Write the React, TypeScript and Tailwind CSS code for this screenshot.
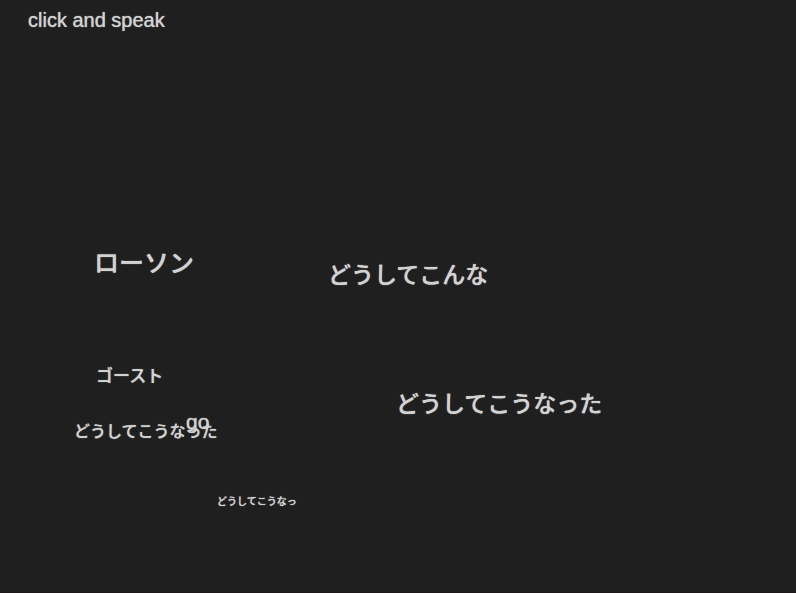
type Phrase = { text: string; className: string };

const phrases: Phrase[] = [
  { text: 'ローソン', className: 'left-[94px] top-[248px] text-[25px]' },
  { text: 'どうしてこんな', className: 'left-[328px] top-[260px] text-[23px]' },
  { text: 'ゴースト', className: 'left-[96px] top-[362px] text-[17px]' },
  { text: 'どうしてこうなった', className: 'left-[396px] top-[389px] text-[23px]' },
  { text: 'どうしてこうなった', className: 'left-[74px] top-[417px] text-[16px]' },
  { text: 'go', className: 'left-[186px] top-[407px] text-[21px]' },
  { text: 'どうしてこうなっ', className: 'left-[217px] top-[487px] text-[10px]' },
];

export default function App() {
  return (
    <main
      lang="ja"
      className="relative min-h-screen overflow-hidden border-b border-[#1c1618] bg-[#1f1f1f] px-7 py-1 font-['Liberation_Sans','Noto_Sans_CJK_JP',sans-serif] font-medium text-[#d2d2d2] [text-shadow:0_0_1px_#d2d2d2]"
    >
      <h1 className="text-[20px] leading-8">click and speak</h1>
      {phrases.map((phrase, index) => (
        <p key={index} className={`absolute leading-[30px] whitespace-nowrap ${phrase.className}`}>
          {phrase.text}
        </p>
      ))}
    </main>
  );
}
